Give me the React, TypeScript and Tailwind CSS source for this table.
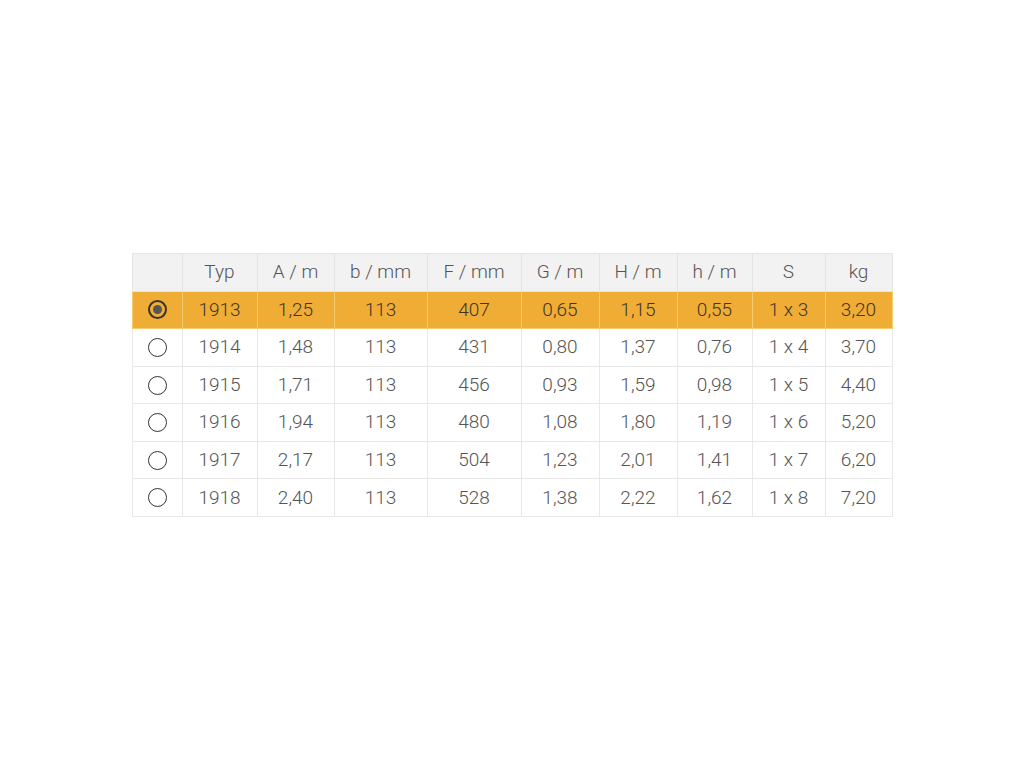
import { useState } from "react";

const headers = ["Typ", "A / m", "b / mm", "F / mm", "G / m", "H / m", "h / m", "S", "kg"];
const widths = ["w-[50px]", "w-[75px]", "w-[77px]", "w-[93px]", "w-[94px]", "w-[78px]", "w-[78px]", "w-[75px]", "w-[73px]", "w-[67px]"];

const rows = [
  ["1913", "1,25", "113", "407", "0,65", "1,15", "0,55", "1 x 3", "3,20"],
  ["1914", "1,48", "113", "431", "0,80", "1,37", "0,76", "1 x 4", "3,70"],
  ["1915", "1,71", "113", "456", "0,93", "1,59", "0,98", "1 x 5", "4,40"],
  ["1916", "1,94", "113", "480", "1,08", "1,80", "1,19", "1 x 6", "5,20"],
  ["1917", "2,17", "113", "504", "1,23", "2,01", "1,41", "1 x 7", "6,20"],
  ["1918", "2,40", "113", "528", "1,38", "2,22", "1,62", "1 x 8", "7,20"],
];

const Radio = ({ checked }: { checked: boolean }) => (
  <span
    className={
      checked
        ? "mx-auto flex h-[19px] w-[19px] items-center justify-center rounded-full border-2 border-[#3a3226]"
        : "mx-auto flex h-[19px] w-[19px] items-center justify-center rounded-full border-[1.5px] border-[#333]"
    }
  >
    {checked && <span className="h-[9px] w-[9px] rounded-full bg-[#555]" />}
  </span>
);

const App = () => {
  const [selected, setSelected] = useState(0);

  return (
    <div className="flex h-screen w-full items-center justify-center bg-white font-['Roboto',sans-serif] font-light text-[19px] text-[#555]">
      <table className="mt-[2px] border-collapse table-fixed">
        <colgroup>
          {widths.map((w, i) => (
            <col key={i} className={w} />
          ))}
        </colgroup>
        <thead>
          <tr className="h-[37.6px] bg-[#f2f2f2]">
            <th className="border border-[#e4e4e4]" />
            {headers.map((h) => (
              <th key={h} className="border border-[#e4e4e4] font-light">
                {h}
              </th>
            ))}
          </tr>
        </thead>
        <tbody>
          {rows.map((row, i) => {
            const on = selected === i;
            return (
              <tr
                key={row[0]}
                onClick={() => setSelected(i)}
                className={on ? "h-[37.6px] bg-[#f0ad35] text-[#3d3428] cursor-pointer" : "h-[37.6px] bg-white cursor-pointer"}
              >
                <td className={on ? "border border-[#f7cc6e] align-middle" : "border border-[#e8e8e8] align-middle"}>
                  <Radio checked={on} />
                </td>
                {row.map((c, j) => (
                  <td key={j} className={on ? "border border-[#f7cc6e] text-center" : "border border-[#e8e8e8] text-center"}>
                    {c}
                  </td>
                ))}
              </tr>
            );
          })}
        </tbody>
      </table>
    </div>
  );
};

export default App;
